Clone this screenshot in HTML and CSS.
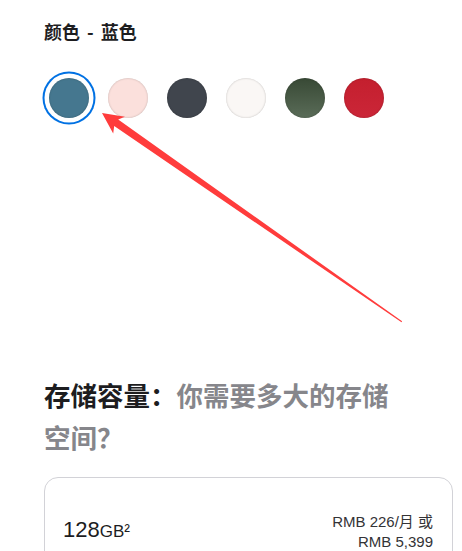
FILE: index.html
```html
<!DOCTYPE html>
<html lang="zh-CN">
<head>
<meta charset="utf-8">
<title>颜色与存储容量</title>
<link rel="stylesheet" href="styles.css">
</head>
<body>
<div class="page">
  <section class="colors">
    <h2 class="color-title">颜色 - 蓝色</h2>
    <div class="swatches">
      <span class="swatch blue selected"></span>
      <span class="swatch pink"></span>
      <span class="swatch dark"></span>
      <span class="swatch white"></span>
      <span class="swatch green"></span>
      <span class="swatch red"></span>
    </div>
  </section>

  <section class="storage">
    <h2 class="storage-title"><span class="strong">存储容量：</span><span class="muted">你需要多大的存储空间？</span></h2>
    <div class="card">
      <div class="capacity"><span class="num">128</span><span class="unit">GB²</span></div>
      <div class="price">
        <div class="price-line">RMB 226/月 或</div>
        <div class="price-line">RMB 5,399</div>
      </div>
    </div>
  </section>

  <svg class="arrow" width="462" height="551" viewBox="0 0 462 551" aria-hidden="true">
    <polygon fill="#ff3c3c" points="102,113 113.2,133.6 114.2,126 401.5,322.3 402.1,321.3 118.2,119.5 124.9,116.8"/>
  </svg>
</div>
</body>
</html>
```
FILE: styles.css
```css
html, body {
  margin: 0;
  padding: 0;
  background: #ffffff;
}

.page {
  position: relative;
  width: 462px;
  min-height: 551px;
  box-sizing: border-box;
  padding: 19px 9px 0 44px;
  font-family: "Liberation Sans", "Noto Sans CJK SC", sans-serif;
  color: #1d1d1f;
}

.color-title {
  margin: 0;
  font-size: 18px;
  line-height: 24px;
  font-weight: 700;
  font-family: "Noto Sans CJK SC", sans-serif;
  color: #1d1d1f;
  word-spacing: 3px;
}

.swatches {
  display: flex;
  gap: 19px;
  margin: 35px 0 0 5px;
}

.swatch {
  display: block;
  width: 40px;
  height: 40px;
  border-radius: 50%;
  box-shadow: inset 0 0 2px rgba(0, 0, 0, 0.25);
}

.swatch.selected {
  box-shadow: inset 0 0 2px rgba(0, 0, 0, 0.25), 0 0 0 4.5px #ffffff, 0 0 0 6.5px #0071e3;
}

.blue { background: #45778f; }
.pink { background: #fbe0dc; }
.dark { background: #40454d; }
.white { background: #faf7f5; }
.green { background: linear-gradient(to bottom, #384935, #5a6c58); }
.red { background: linear-gradient(to bottom, #c41f2e, #cb2638); }

.storage-title {
  margin: 256px 0 0 0;
  max-width: 360px;
  font-size: 26.5px;
  line-height: 42px;
  font-weight: 700;
  font-family: "Noto Sans CJK SC", sans-serif;
}

.strong { color: #1d1d1f; }
.muted { color: #86868b; }

.card {
  margin-top: 19px;
  min-height: 120px;
  border: 1px solid #d2d2d7;
  border-radius: 14px;
  padding: 34px 19px 0 18px;
  display: flex;
  justify-content: space-between;
  align-items: flex-start;
}

.capacity {
  margin-top: 4px;
  line-height: 28px;
  color: #1d1d1f;
}

.num {
  font-size: 22px;
}

.unit {
  font-size: 17px;
}

.price {
  text-align: right;
  font-size: 15px;
  line-height: 20px;
  color: #333336;
}

.arrow {
  position: absolute;
  left: 0;
  top: 0;
  pointer-events: none;
}
```
